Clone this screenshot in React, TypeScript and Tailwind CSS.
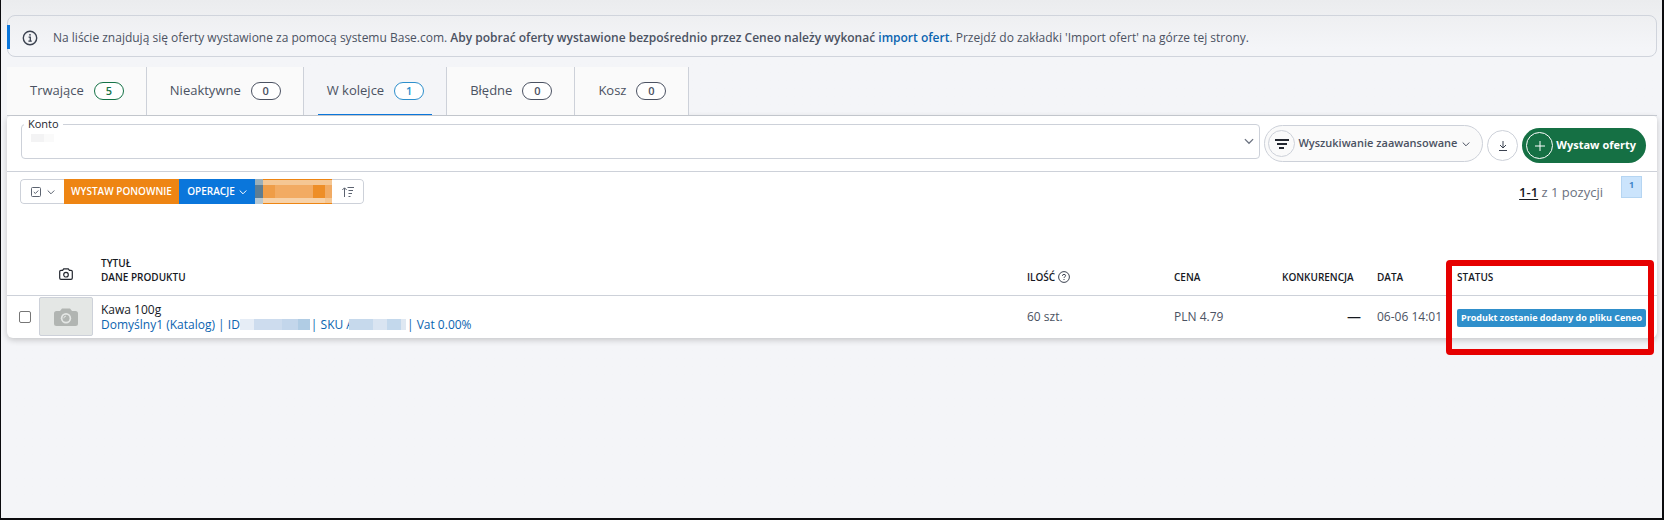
import { useState } from "react";

interface Tab {
  label: string;
  count: number;
  badge: string;
}

const TABS: Tab[] = [
  { label: "Trwające", count: 5, badge: "border-[#157347] text-[#157347]" },
  { label: "Nieaktywne", count: 0, badge: "border-[#4b5262] text-[#4b5262]" },
  { label: "W kolejce", count: 1, badge: "border-[#2d8fcc] text-[#2d8fcc]" },
  { label: "Błędne", count: 0, badge: "border-[#4b5262] text-[#4b5262]" },
  { label: "Kosz", count: 0, badge: "border-[#4b5262] text-[#4b5262]" },
];

function Chevron({ className = "size-2" }: { className?: string }) {
  return (
    <svg viewBox="0 0 8 8" className={`shrink-0 ${className}`} fill="none" stroke="currentColor" strokeWidth="1" aria-hidden="true">
      <path d="M0.7 2.5 L4 5.8 L7.3 2.5" />
    </svg>
  );
}

function InfoIcon() {
  return (
    <svg viewBox="0 0 16 16" className="size-4 shrink-0" fill="none" stroke="#3b4250" aria-hidden="true">
      <circle cx="8" cy="8" r="6.7" strokeWidth="1.4" />
      <path d="M6.6 7.2H8.3V11M6.4 11.1H9.8" strokeWidth="1.3" />
      <circle cx="8" cy="4.8" r="0.9" fill="#3b4250" stroke="none" />
    </svg>
  );
}

function CameraIcon() {
  return (
    <svg viewBox="0 0 14 12" className="h-3 w-3.5" fill="none" stroke="#23272f" strokeWidth="1.2" aria-hidden="true">
      <path d="M2 2.3H3.6L4.7 0.8H9.3L10.4 2.3H12Q13.3 2.3 13.3 3.6V10Q13.3 11.3 12 11.3H2Q0.7 11.3 0.7 10V3.6Q0.7 2.3 2 2.3Z" />
      <circle cx="7" cy="6.7" r="2.3" />
    </svg>
  );
}

function ProductPlaceholder() {
  return (
    <svg viewBox="0 0 24 18" className="h-[18px] w-6" aria-hidden="true">
      <path d="M2.5 3H6L8 0.5H16L18 3H21.5Q24 3 24 5.5V15.5Q24 18 21.5 18H2.5Q0 18 0 15.5V5.5Q0 3 2.5 3Z" fill="#b1b5b2" />
      <circle cx="12" cy="10.3" r="5.2" fill="#e4e7e5" />
      <circle cx="12" cy="10.3" r="3.5" fill="#b1b5b2" />
      <path d="M9.8 10.3Q9.8 8.1 12 8.1" fill="none" stroke="#e4e7e5" strokeWidth="1" />
    </svg>
  );
}

function MaskedButton() {
  return (
    <button type="button" aria-label="Akcja" className="w-[77px] bg-[#ee8513]">
      <svg viewBox="0 0 77 25" preserveAspectRatio="none" className="block h-[25px] w-full" shapeRendering="crispEdges">
        <rect y="1" width="77" height="23" fill="#f5c794" />
        <rect width="8" height="6" fill="#9aafba" />
        <rect y="6" width="8" height="13" fill="#5d7d93" />
        <rect y="19" width="8" height="6" fill="#b8c8d2" />
        <rect x="8" y="6" width="12" height="13" fill="#ef9d48" />
        <rect x="20" y="6" width="38" height="13" fill="#f2ab63" />
        <rect x="58" y="6" width="12" height="13" fill="#ee8e27" />
        <rect x="70" y="6" width="7" height="13" fill="#f1ab64" />
        <rect x="8" y="19" width="62" height="5" fill="#f7d2a9" />
      </svg>
    </button>
  );
}

export default function App() {
  const [active, setActive] = useState(2);
  const [selected, setSelected] = useState(false);

  return (
    <div className="min-h-screen border-r-2 border-b-2 border-l border-[#0b0b0e] bg-[#f4f5f8] bg-linear-to-b from-[#ebecee] to-[#f4f5f8] to-[48px] pt-[15px] pr-[5px] pl-1.5 font-['Open_Sans',sans-serif] text-[#4b5262]">
      {/* Notice */}
      <div className="relative flex h-[42px] items-center gap-[15px] rounded-lg border border-[#d0d4dc] px-3.5 pt-[3px] text-xs">
        <span className="absolute -left-px top-[9px] h-6 w-[3px] bg-[#0a76db]" />
        <InfoIcon />
        <p>
          Na liście znajdują się oferty wystawione za pomocą systemu Base.com.{" "}
          <strong className="font-semibold">
            Aby pobrać oferty wystawione bezpośrednio przez Ceneo należy wykonać{" "}
            <a href="#import" className="text-[#0b64b0]">import ofert</a>
          </strong>
          . Przejdź do zakładki 'Import ofert' na górze tej strony.
        </p>
      </div>

      {/* Tabs */}
      <nav className="mt-2.5 flex h-[49px] border-b border-[#cbcfd6]">
        {TABS.map((tab, i) => (
          <button
            key={tab.label}
            type="button"
            onClick={() => setActive(i)}
            className={`relative flex items-center gap-2.5 border-r border-[#cdd1d9] pr-[22px] pl-[23px] text-[13px] ${i === active ? "bg-[#f4f5f8]" : "bg-[#fafafa]"}`}
          >
            {tab.label}
            <span className={`flex h-[18px] w-[30px] items-center justify-center rounded-full border bg-white text-[11px] font-semibold ${tab.badge}`}>
              {tab.count}
            </span>
            {i === active && <span className="absolute inset-x-[14px] bottom-0 h-px bg-[#0a76db]" />}
          </button>
        ))}
      </nav>

      <main className="rounded-b-md rounded-t-sm bg-white shadow-[0_2px_6px_rgba(0,0,0,0.2)]">
        {/* Filters */}
        <div className="flex h-14 items-center gap-1 border-b border-[#cdd1d9] pr-[11px] pl-3.5">
          <div className="relative mb-1 flex-1">
            <label htmlFor="account" className="absolute -top-2 left-[3px] bg-white px-1 text-[11px] leading-4 text-[#23272f]">
              Konto
            </label>
            <select id="account" className="block h-[35px] w-full appearance-none rounded-sm border border-[#cdd1d9] bg-white px-2.5 text-xs">
              <option></option>
            </select>
            <span className="pointer-events-none absolute left-2.5 top-2.5 flex h-2">
              <span className="w-[13px] bg-[#f3f3f4]" />
              <span className="w-2.5 bg-[#fafafa]" />
            </span>
            <Chevron className="pointer-events-none absolute right-1.5 top-3 size-2.5 text-[#6b7280]" />
          </div>

          <button type="button" className="flex h-[37px] items-center rounded-full border border-[#cdd1d9] bg-[#fafafa] pr-3 pl-[3px] text-[11px] font-semibold">
            <span className="mr-[3px] flex size-[27px] items-center justify-center rounded-full border border-[#cdd1d9]">
              <svg viewBox="0 0 14 10" className="h-2.5 w-3.5" stroke="#23272f" strokeWidth="2" aria-hidden="true">
                <path d="M0 1H14M2 5H12M4 9H9" />
              </svg>
            </span>
            Wyszukiwanie zaawansowane
            <Chevron className="ml-[5px] size-2" />
          </button>

          <button type="button" aria-label="Pobierz" className="mt-1 flex size-[31px] items-center justify-center rounded-full border border-[#cdd1d9] bg-white">
            <svg viewBox="0 0 10 10" className="size-2.5" fill="none" stroke="#3b4250" aria-hidden="true">
              <path d="M5 0V7M2 4L5 7L8 4M1 9.5H9" />
            </svg>
          </button>

          <button type="button" className="mt-1 flex h-[35px] items-center gap-[3px] rounded-full bg-[#157044] pr-2.5 pl-1 text-[11px] font-bold text-white">
            <span className="flex size-[27px] items-center justify-center rounded-full border border-white">
              <svg viewBox="0 0 10 10" className="size-2.5" stroke="white" aria-hidden="true">
                <path d="M5 0V10M0 5H10" />
              </svg>
            </span>
            Wystaw oferty
          </button>
        </div>

        {/* Bulk actions */}
        <div className="flex items-start justify-between pt-[7px] pr-[15px] pl-[13px]">
          <div className="flex h-[25px] overflow-hidden rounded-sm text-[10px] font-semibold text-white">
            <button type="button" aria-label="Zaznacz" className="flex w-11 items-center justify-center gap-1.5 rounded-l-sm border border-r-0 border-[#cdd1d9] text-[#5c6370]">
              <svg viewBox="0 0 10 10" className="size-2.5" fill="none" stroke="currentColor" aria-hidden="true">
                <rect x="0.5" y="0.5" width="9" height="9" rx="1" />
                <path d="M2.8 5L4.4 6.5L7.3 3.5" />
              </svg>
              <Chevron />
            </button>
            <button type="button" className="w-[115px] bg-[#ee8513]">WYSTAW PONOWNIE</button>
            <button type="button" className="flex w-[76px] items-center justify-center gap-1 bg-[#0a76db]">
              OPERACJE
              <Chevron />
            </button>
            <MaskedButton />
            <button type="button" aria-label="Sortuj" className="flex w-8 items-center justify-center rounded-r-sm border border-l-0 border-[#cdd1d9] text-[#5c6370]">
              <svg viewBox="0 0 12 10" className="h-2.5 w-3" fill="none" stroke="currentColor" aria-hidden="true">
                <path d="M2.5 10V1M0.3 3L2.5 0.8L4.7 3M5.5 0.5H12M6.5 3.5H11M6.5 6.5H10M6.5 9.5H8.5" />
              </svg>
            </button>
          </div>
          <div className="-mt-[3px] flex gap-[18px] text-[13px] text-[#6b7280]">
            <p className="pt-[7px]">
              <a href="#page" className="font-semibold text-[#16191f] underline underline-offset-2">1-1</a> z 1 pozycji
            </p>
            <button type="button" className="h-[22px] w-[21px] border border-[#b5d5f2] bg-[#cbe4fc] pb-1 text-[9px] font-bold leading-4 text-[#3f86c8]">
              1
            </button>
          </div>
        </div>

        {/* Offers */}
        <table className="mt-[50px] w-full table-fixed text-left text-xs">
          <colgroup>
            <col className="w-8" />
            <col className="w-[62px]" />
            <col />
            <col className="w-[147px]" />
            <col className="w-[100px]" />
            <col className="w-[103px]" />
            <col className="w-20" />
            <col className="w-[200px]" />
          </colgroup>
          <thead>
            <tr className="h-[41px] border-b border-[#cdd1d9] align-bottom text-[10px] leading-[14px] text-[#16191f] *:pb-[11px] *:font-semibold">
              <th></th>
              <th className="pl-5" aria-label="Zdjęcie">
                <div className="pb-1">
                  <CameraIcon />
                </div>
              </th>
              <th>
                TYTUŁ
                <br />
                DANE PRODUKTU
              </th>
              <th>
                <span className="flex items-center gap-[3px]">
                  ILOŚĆ
                  <svg viewBox="0 0 12 12" className="size-3" fill="none" stroke="#3b4250" aria-hidden="true">
                    <circle cx="6" cy="6" r="5.4" />
                    <path d="M4.4 4.8Q4.5 3.4 6 3.4Q7.6 3.4 7.6 4.7Q7.6 5.5 6.7 5.9Q6 6.3 6 7M6 8V9" />
                  </svg>
                </span>
              </th>
              <th>CENA</th>
              <th className="pl-2">KONKURENCJA</th>
              <th>DATA</th>
              <th className="relative">
                STATUS
                <span className="pointer-events-none absolute -left-[11px] right-[3px] top-1.5 h-[95px] rounded-sm border-6 border-[#e60000]" />
              </th>
            </tr>
          </thead>
          <tbody>
            <tr className="h-[43px]">
              <td className="pl-3">
                <input
                  type="checkbox"
                  aria-label="Zaznacz Kawa 100g"
                  checked={selected}
                  onChange={(e) => setSelected(e.target.checked)}
                  className="block size-3 appearance-none rounded-xs border border-[#767676] bg-white checked:bg-[#0a76db]"
                />
              </td>
              <td>
                <div className="flex h-[39px] w-[54px] items-center justify-center rounded-xs border border-[#cdd1d9] bg-[#e4e7e5]">
                  <ProductPlaceholder />
                </div>
              </td>
              <td className="leading-[15px]">
                <p className="text-[#16191f]">Kawa 100g</p>
                <a href="#product" className="flex items-center gap-px whitespace-nowrap text-[#0b64b0]">
                  <span className="flex items-center">
                    Domyślny1 (Katalog) | ID
                    <span className="flex h-[11px]">
                      <span className="w-3.5 bg-[#e6edf6]" />
                      <span className="w-7 bg-[#cddcee]" />
                      <span className="w-4 bg-[#c3d6eb]" />
                      <span className="w-3 bg-[#b0cce4]" />
                    </span>
                  </span>
                  <span className="flex items-center">
                    | SKU A
                    <span className="relative -ml-[5px] flex h-[11px]">
                      <span className="w-6 bg-[#c6d9ec]" />
                      <span className="w-3.5 bg-[#d9e4f1]" />
                      <span className="w-3.5 bg-[#c3d8ec]" />
                      <span className="w-[5px] bg-[#dfe8f2]" />
                    </span>
                  </span>
                  <span>| Vat 0.00%</span>
                </a>
              </td>
              <td>60 szt.</td>
              <td>PLN 4.79</td>
              <td className="pr-4 text-right text-sm text-[#16191f]">—</td>
              <td>06-06 14:01</td>
              <td className="pt-0.5">
                <span className="inline-block h-[18px] whitespace-nowrap rounded-xs bg-[#2f8fcb] px-1 text-[9px] font-bold leading-[18px] text-white">
                  Produkt zostanie dodany do pliku Ceneo
                </span>
              </td>
            </tr>
          </tbody>
        </table>
      </main>
    </div>
  );
}
